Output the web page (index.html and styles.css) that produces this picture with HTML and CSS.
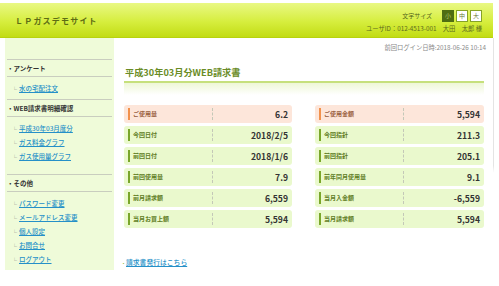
FILE: index.html
```html
<!DOCTYPE html>
<html lang="ja">
<head>
    <meta charset="UTF-8">
    <meta name="viewport" content="width=device-width, initial-scale=1.0">
    <title>LPガスデモサイト</title>
    <link rel="stylesheet" href="styles.css">
</head>
<body>
    <div class="page">
        <header class="header">
            <h1 class="site-title">ＬＰガスデモサイト</h1>
            <div class="header-info">
                <div class="font-size">
                    <span class="font-size-label">文字サイズ</span>
                    <span class="size-btn active">小</span>
                    <span class="size-btn">中</span>
                    <span class="size-btn">大</span>
                </div>
                <div class="user">ユーザID：012-4513-001　大田　太郎 様</div>
            </div>
        </header>

        <div class="body">
            <nav class="side">
                <div class="side-head">・アンケート</div>
                <ul class="side-list">
                    <li><a href="#">水の宅配注文</a></li>
                </ul>
                <div class="side-head">・WEB請求書明細確認</div>
                <ul class="side-list side-list-wide">
                    <li><a href="#">平成30年03月度分</a></li>
                    <li><a href="#">ガス料金グラフ</a></li>
                    <li><a href="#">ガス使用量グラフ</a></li>
                </ul>
                <div class="side-head">・その他</div>
                <ul class="side-list">
                    <li><a href="#">パスワード変更</a></li>
                    <li><a href="#">メールアドレス変更</a></li>
                    <li><a href="#">個人設定</a></li>
                    <li><a href="#">お問合せ</a></li>
                    <li><a href="#">ログアウト</a></li>
                </ul>
            </nav>

            <main class="main">
                <div class="last-login">前回ログイン日時:2018-06-26 10:14</div>
                <h2 class="bill-title">平成30年03月分WEB請求書</h2>
                <div class="title-line"></div>

                <div class="bill">
                    <div class="bill-col">
                        <div class="row row-main"><span class="label">ご使用量</span><span class="value">6.2</span></div>
                        <div class="row"><span class="label">今回日付</span><span class="value">2018/2/5</span></div>
                        <div class="row"><span class="label">前回日付</span><span class="value">2018/1/6</span></div>
                        <div class="row"><span class="label">前回使用量</span><span class="value">7.9</span></div>
                        <div class="row"><span class="label">前月請求額</span><span class="value">6,559</span></div>
                        <div class="row"><span class="label">当月お買上額</span><span class="value">5,594</span></div>
                    </div>
                    <div class="bill-col">
                        <div class="row row-main"><span class="label">ご使用金額</span><span class="value">5,594</span></div>
                        <div class="row"><span class="label">今回指針</span><span class="value">211.3</span></div>
                        <div class="row"><span class="label">前回指針</span><span class="value">205.1</span></div>
                        <div class="row"><span class="label">前年同月使用量</span><span class="value">9.1</span></div>
                        <div class="row"><span class="label">当月入金額</span><span class="value">-6,559</span></div>
                        <div class="row"><span class="label">当月請求額</span><span class="value">5,594</span></div>
                    </div>
                </div>

                <div class="issue"><span class="issue-dot">・</span><a href="#">請求書発行はこちら</a></div>
            </main>
        </div>
    </div>
</body>
</html>
```

FILE: styles.css
```css
body {
    margin: 0;
    padding: 0;
    font-family: "Noto Sans CJK JP", sans-serif;
    background-color: #fff;
    color: #333;
}

.page {
    width: 494px;
    background: linear-gradient(90deg, transparent 5px, #effbd9 5px, #effbd9 114px, transparent 114px) no-repeat;
    background-size: 100% 269px;
}

/* ヘッダー */
.header {
    margin-top: 3px;
    width: 493px;
    height: 35px;
    box-sizing: border-box;
    display: flex;
    justify-content: space-between;
    align-items: center;
    background: linear-gradient(#e9f884, #d6ee3e 55%, #c2dc14);
    border-bottom: 1px solid #b8d20e;
}

.site-title {
    margin: 0 0 0 15px;
    font-size: 8px;
    font-weight: bold;
    letter-spacing: 1.2px;
    color: #5d6c14;
}

.header-info {
    display: flex;
    flex-direction: column;
    align-items: flex-end;
    gap: 2px;
    padding-right: 11px;
    padding-top: 2px;
}

.font-size {
    display: flex;
    align-items: center;
    gap: 2px;
}

.font-size-label {
    font-size: 6px;
    color: #56661a;
    margin-right: 8px;
}

.size-btn {
    width: 12px;
    height: 12px;
    box-sizing: border-box;
    border: 1px solid #86a326;
    background-color: #fff;
    color: #6a7a30;
    font-size: 6px;
    line-height: 10px;
    text-align: center;
}

.size-btn.active {
    background-color: #4f6d12;
    border-color: #4f6d12;
    color: #b4cc70;
}

.user {
    font-size: 6.3px;
    color: #5d6c20;
}

/* 本体 */
.body {
    display: grid;
    grid-template-columns: 109px 1fr;
    margin-left: 5px;
}

.side {
    padding: 21px 2px 0 2px;
}

.side-head {
    height: 16px;
    line-height: 16px;
    border-top: 1px solid #c9cdbf;
    border-bottom: 1px solid #c9cdbf;
    font-size: 6.5px;
    font-weight: bold;
    color: #333;
}

.side-list {
    list-style: none;
    margin: 0;
    padding: 4px 0;
}

.side-list-wide {
    padding-bottom: 11px;
}

.side-list li {
    height: 14px;
    line-height: 14px;
    font-size: 6.5px;
    padding-left: 5px;
}

.side-list li::before {
    content: "└";
    color: #888;
    font-size: 5px;
    margin-right: 2px;
}

.side-list a, .issue a {
    color: #2590c8;
    text-decoration: underline;
    font-weight: 500;
}

.main {
    padding: 4px 9px 0 10px;
    border-right: 1px solid;
    border-image: linear-gradient(#e4e4e4 55%, transparent 58%) 1;
}

.last-login {
    text-align: right;
    font-size: 6.3px;
    color: #8a8a8a;
    line-height: 12px;
    margin-right: -2px;
}

.bill-title {
    margin: 11px 0 0 1px;
    font-size: 9.2px;
    font-weight: bold;
    line-height: 14px;
    color: #6a8c26;
}

.title-line {
    margin-top: 2px;
    height: 12px;
    border-top: 2px solid #c6e07c;
    background: linear-gradient(#eef7d6, #fff);
}

.bill {
    display: grid;
    grid-template-columns: 168px 169px;
    justify-content: space-between;
    margin-top: 10px;
}

.bill-col {
    display: flex;
    flex-direction: column;
    gap: 3px;
}

.row {
    position: relative;
    height: 18px;
    display: grid;
    grid-template-columns: 89px 1fr;
    align-items: center;
    background-color: #eaf9cd;
    border-radius: 3px;
}

.row::before {
    content: "";
    position: absolute;
    left: 4px;
    top: 3px;
    bottom: 3px;
    width: 2px;
    background-color: #7aa62a;
}

.row-main {
    background-color: #fde6da;
}

.row-main::before {
    background-color: #f2914c;
}

.label {
    padding-left: 9px;
    font-size: 6px;
    font-weight: bold;
    color: #5f7d24;
    border-right: 1px dashed #c4c8b8;
    line-height: 12px;
}

.row-main .label {
    color: #9a6040;
}

.value {
    text-align: right;
    padding-right: 4px;
    font-size: 8.6px;
    font-weight: bold;
    color: #333;
}

.issue {
    margin-top: 28px;
    font-size: 6.8px;
    line-height: 12px;
}

.issue-dot {
    color: #8ab436;
    font-size: 5px;
    margin-left: -3px;
}
```
